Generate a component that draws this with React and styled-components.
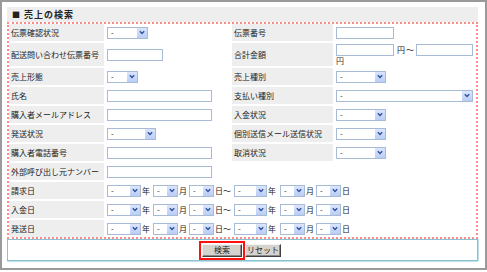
import React from "react";
import styled, { createGlobalStyle } from "styled-components";

const Global = createGlobalStyle`
  html, body { margin: 0; padding: 0; background: #fff; }
  body {
    font-family: "Noto Sans CJK JP", "Noto Sans", sans-serif;
    font-size: 8px;
    color: #333;
  }
`;

const Frame = styled.div`
  width: 487px;
  height: 270px;
  box-sizing: border-box;
  border: 2px solid #9a9a9a;
  padding: 5px 0 0 5px;
`;

const Section = styled.div`
  width: 471px;
`;

const Header = styled.div`
  height: 15px;
  background: #eeeeee;
  display: flex;
  align-items: center;
  padding-left: 5px;
  font-size: 9px;
  font-weight: bold;
  letter-spacing: 1px;
  color: #222;
`;

const Square = styled.span`
  font-size: 8px;
  margin-right: 4px;
  letter-spacing: 0;
`;

const Dotted = styled.div`
  border: 2px dotted #ff8a8a;
`;

const Grid = styled.div`
  display: grid;
  grid-template-columns: 95px 126px 101px 1fr;
  column-gap: 1px;
  row-gap: 2px;
`;

const Label = styled.div`
  background: #eeeeee;
  display: flex;
  align-items: center;
  padding-left: 2px;
  min-height: 17px;
  white-space: nowrap;
  color: #222;
`;

const Value = styled.div`
  display: flex;
  flex-direction: ${(p) => (p.$stack ? "column" : "row")};
  align-items: ${(p) => (p.$stack ? "flex-start" : "center")};
  justify-content: ${(p) => (p.$stack ? "center" : "flex-start")};
  padding: ${(p) => (p.$stack ? "1px" : "2px")} 0 ${(p) => (p.$stack ? "1px" : "2px")} 2px;
  min-height: 13px;
  grid-column: span ${(p) => p.$span || 1};
  white-space: nowrap;
`;

const Line = styled.div`
  display: flex;
  align-items: center;
  line-height: 9px;
  height: ${(p) => (p.$h ? `${p.$h}px` : "auto")};
`;

const TextInput = styled.span`
  display: inline-block;
  width: ${(p) => p.$w}px;
  height: 12px;
  box-sizing: border-box;
  border: 1px solid #a7bbd6;
  background: #fff;
`;

const SelectBox = styled.span`
  display: inline-flex;
  width: ${(p) => p.$w}px;
  height: 12px;
  box-sizing: border-box;
  border: 1px solid #a7bbd6;
  background: #fff;
`;

const SelText = styled.span`
  flex: 1;
  padding-left: 3px;
  font-size: 8px;
  line-height: 10px;
  color: #333;
`;

const SelArrow = styled.span`
  width: 10px;
  background: linear-gradient(#dbe6fd, #b9cdf5);
  display: flex;
  align-items: center;
  justify-content: center;
`;

const Unit = styled.span`
  margin: 0 ${(p) => p.$r ?? 3}px 0 ${(p) => p.$l ?? 1}px;
  line-height: 10px;
  color: #222;
`;

const ButtonBar = styled.div`
  height: 22px;
  box-sizing: border-box;
  border: 1px solid #86c2d2;
  box-shadow: 0 1px 0 #bfe0e8, 1px 0 0 #bfe0e8;
  display: flex;
  align-items: center;
  justify-content: center;
  padding-right: 5px;
`;

const Highlight = styled.span`
  display: inline-flex;
  border: 2px solid #ff1010;
  padding: 1px;
`;

const Btn = styled.button`
  width: ${(p) => p.$w}px;
  height: 13px;
  box-sizing: border-box;
  padding: 0;
  margin: 0;
  font-family: "Noto Sans CJK JP", sans-serif;
  font-size: 8px;
  line-height: 10px;
  color: #222;
  background: #d6d3ce;
  border: 1px solid;
  border-color: #f4f4f4 #404040 #404040 #f4f4f4;
  box-shadow: inset -1px -1px 0 #8a8a8a;
  display: inline-flex;
  align-items: center;
  justify-content: center;
`;

const Chevron = () => (
  <svg width="6" height="5" viewBox="0 0 6 5">
    <path d="M0.8 1.2 L3 3.4 L5.2 1.2" fill="none" stroke="#2f4f9a" strokeWidth="1.4" />
  </svg>
);

const Select = ({ w }) => (
  <SelectBox $w={w}>
    <SelText>-</SelText>
    <SelArrow>
      <Chevron />
    </SelArrow>
  </SelectBox>
);

const DateRange = () => (
  <>
    <Select w={34} />
    <Unit>年</Unit>
    <Select w={25} />
    <Unit $r={2}>月</Unit>
    <Select w={25} />
    <Unit $r={3}>日～</Unit>
    <Select w={33} />
    <Unit $r={4}>年</Unit>
    <Select w={25} />
    <Unit $r={2}>月</Unit>
    <Select w={25} />
    <Unit>日</Unit>
  </>
);

export default function App() {
  return (
    <>
      <Global />
      <Frame>
        <Section>
          <Header>
            <Square>■</Square>売上の検索
          </Header>
          <Dotted>
            <Grid>
              <Label>伝票確認状況</Label>
              <Value><Select w={41} /></Value>
              <Label>伝票番号</Label>
              <Value><TextInput $w={58} /></Value>

              <Label>配送問い合わせ伝票番号</Label>
              <Value><TextInput $w={56} /></Value>
              <Label>合計金額</Label>
              <Value $stack>
                <Line $h={12}>
                  <TextInput $w={58} />
                  <Unit $l={3} $r={0}>円</Unit>
                  <Unit $l={1} $r={2}>～</Unit>
                  <TextInput $w={57} />
                </Line>
                <Line $h={9}>円</Line>
              </Value>

              <Label>売上形態</Label>
              <Value><Select w={31} /></Value>
              <Label>売上種別</Label>
              <Value><Select w={50} /></Value>

              <Label>氏名</Label>
              <Value><TextInput $w={105} /></Value>
              <Label>支払い種別</Label>
              <Value><Select w={137} /></Value>

              <Label>購入者メールアドレス</Label>
              <Value><TextInput $w={105} /></Value>
              <Label>入金状況</Label>
              <Value><Select w={50} /></Value>

              <Label>発送状況</Label>
              <Value><Select w={49} /></Value>
              <Label>個別送信メール送信状況</Label>
              <Value><Select w={50} /></Value>

              <Label>購入者電話番号</Label>
              <Value><TextInput $w={105} /></Value>
              <Label>取消状況</Label>
              <Value><Select w={50} /></Value>

              <Label>外部呼び出し元ナンバー</Label>
              <Value $span={3}><TextInput $w={105} /></Value>

              <Label>請求日</Label>
              <Value $span={3}><DateRange /></Value>

              <Label>入金日</Label>
              <Value $span={3}><DateRange /></Value>

              <Label>発送日</Label>
              <Value $span={3}><DateRange /></Value>
            </Grid>
          </Dotted>
          <ButtonBar>
            <Highlight>
              <Btn $w={40}>検索</Btn>
            </Highlight>
            <Btn $w={36}>リセット</Btn>
          </ButtonBar>
        </Section>
      </Frame>
    </>
  );
}
